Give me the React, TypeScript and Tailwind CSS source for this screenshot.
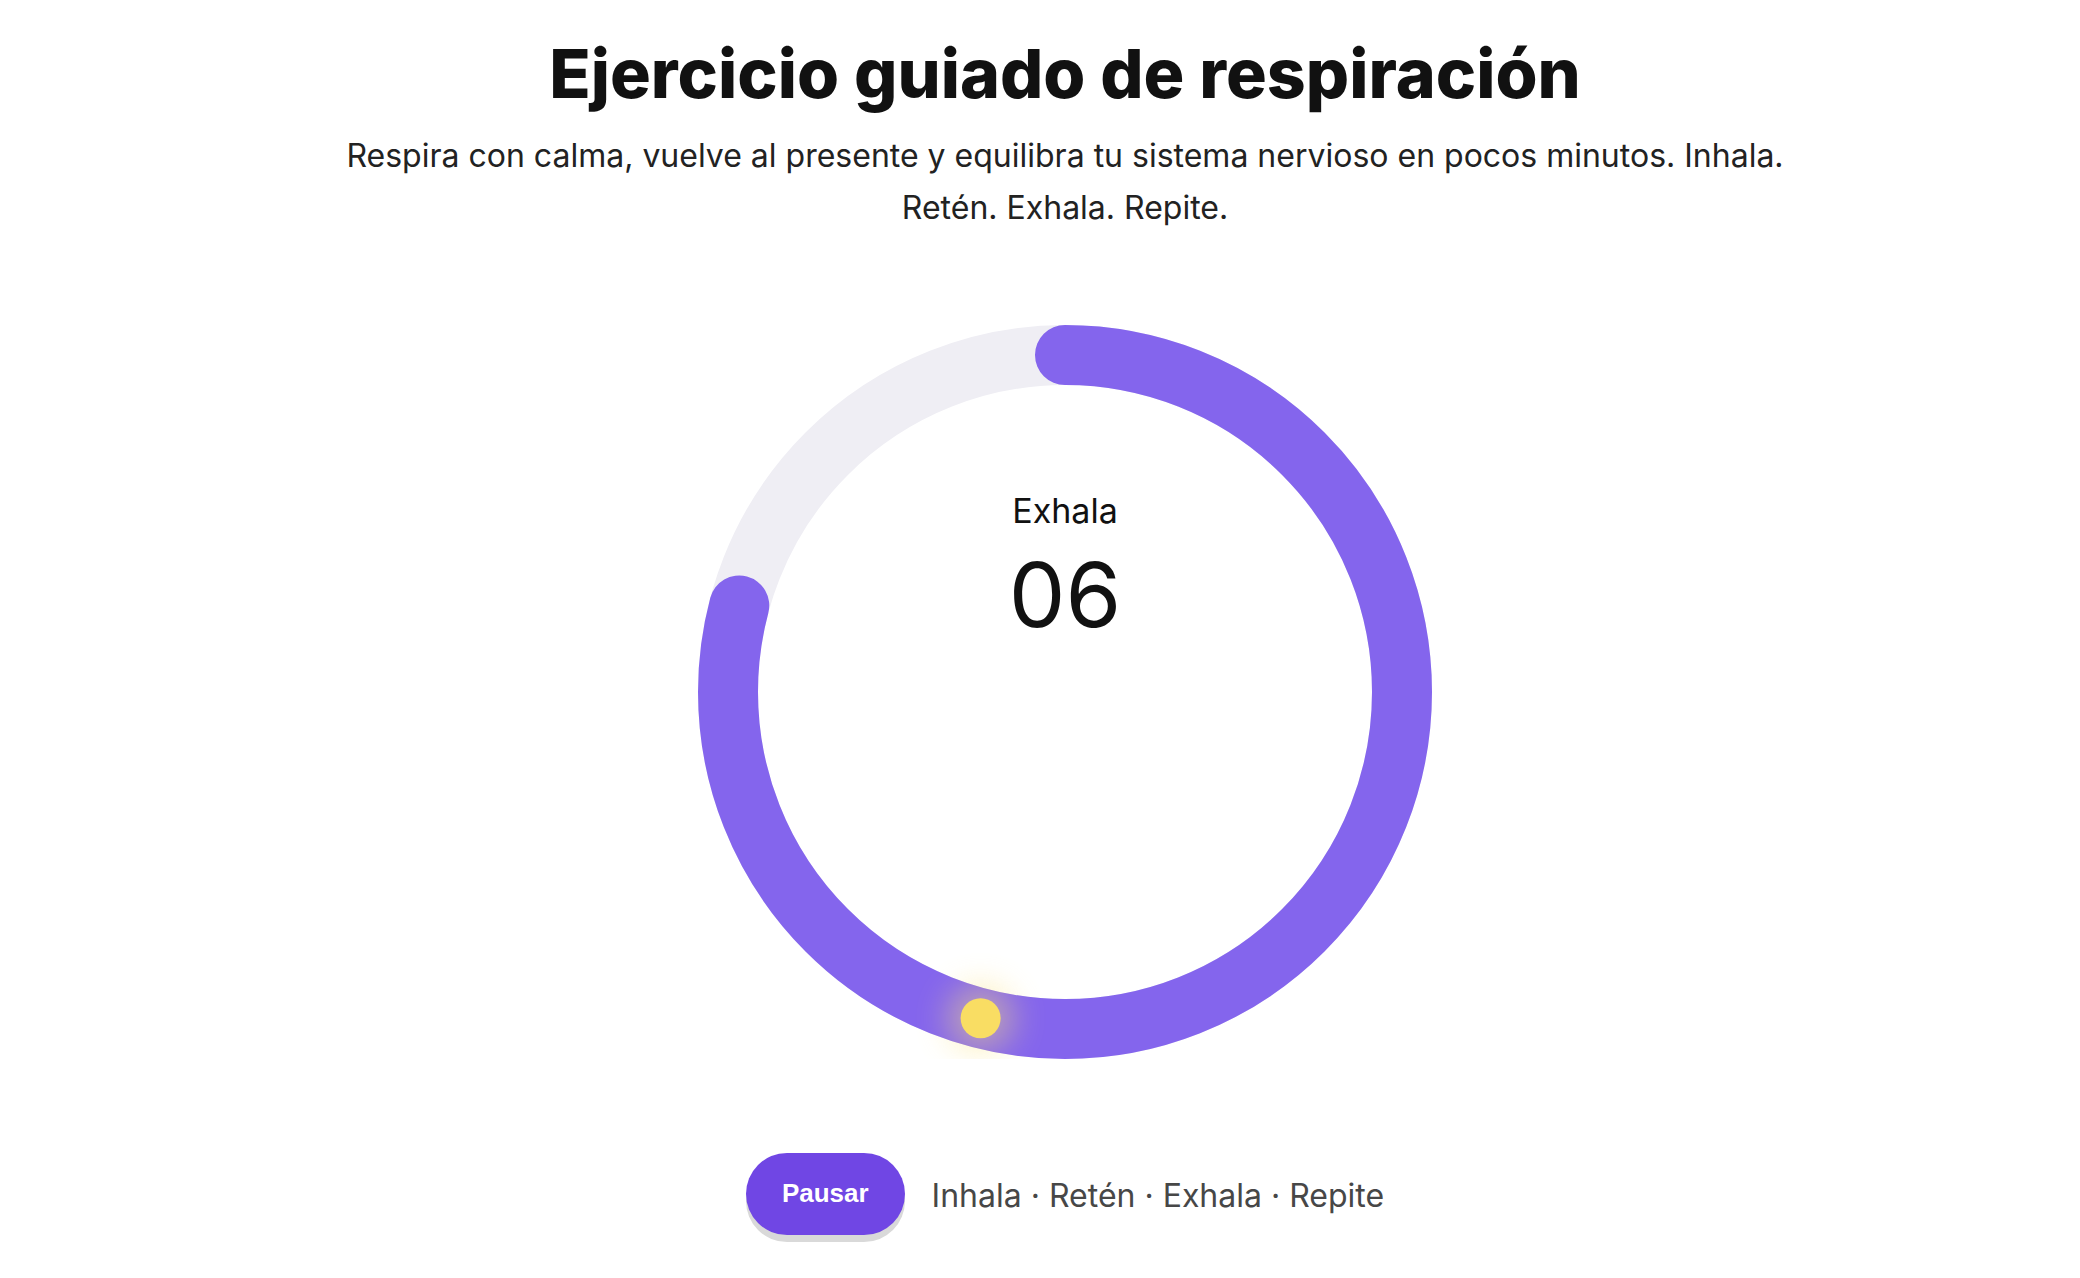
import React from "react";

const SIZE = 734;
const R = 337;
const STROKE = 60;
const PROGRESS = 0.791;
const DOT_ANGLE = 194.5;

const BreathRing = () => {
    const c = SIZE / 2;
    const circ = 2 * Math.PI * R;
    const rad = (DOT_ANGLE * Math.PI) / 180;
    const dotX = c + R * Math.sin(rad);
    const dotY = c - R * Math.cos(rad);

    return (
        <div className="relative w-[734px] h-[734px]">
            <svg width={SIZE} height={SIZE} viewBox={`0 0 ${SIZE} ${SIZE}`}>
                <defs>
                    <filter id="glow" x="-100%" y="-100%" width="300%" height="300%">
                        <feGaussianBlur stdDeviation="16" />
                    </filter>
                </defs>
                <circle cx={c} cy={c} r={R} fill="none" stroke="#efeef4" strokeWidth={STROKE} />
                <circle
                    cx={c}
                    cy={c}
                    r={R}
                    fill="none"
                    stroke="#8465ed"
                    strokeWidth={STROKE}
                    strokeLinecap="round"
                    strokeDasharray={`${circ * PROGRESS} ${circ}`}
                    transform={`rotate(-90 ${c} ${c})`}
                />
                <circle cx={dotX} cy={dotY} r={34} fill="#fbe27a" opacity={0.45} filter="url(#glow)" />
                <circle cx={dotX} cy={dotY} r={20} fill="#f9dd63" />
            </svg>
            <div className="absolute inset-x-0 top-[169px] flex flex-col items-center text-[#111111]">
                <span className="text-[34px] leading-none">Exhala</span>
                <span className="mt-[22px] text-[90px] leading-none font-normal">06</span>
            </div>
        </div>
    );
};

export default function App() {
    return (
        <div className="min-h-screen bg-white flex flex-col items-center pt-[36px] pl-[50px] font-['Inter',sans-serif]">
            <h1 className="text-[68px] leading-[1.1] font-extrabold text-[#111111]">
                Ejercicio guiado de respiración
            </h1>
            <p className="mt-[19px] max-w-[1480px] text-center text-[32px] leading-[52px] text-[#222222]">
                Respira con calma, vuelve al presente y equilibra tu sistema nervioso en pocos minutos. Inhala. Retén. Exhala. Repite.
            </p>
            <div className="mt-[91px]">
                <BreathRing />
            </div>
            <div className="mt-[94px] flex items-center gap-[27px]">
                <button
                    type="button"
                    className="h-[82px] px-[36px] rounded-full bg-[#7046e4] text-white text-[26px] font-bold font-['Liberation_Sans',Arial,sans-serif] shadow-[0_7px_0_#d9d9d9]"
                >
                    Pausar
                </button>
                <span className="mt-[4px] text-[32px] text-[#474747]">Inhala · Retén · Exhala · Repite</span>
            </div>
        </div>
    );
}
